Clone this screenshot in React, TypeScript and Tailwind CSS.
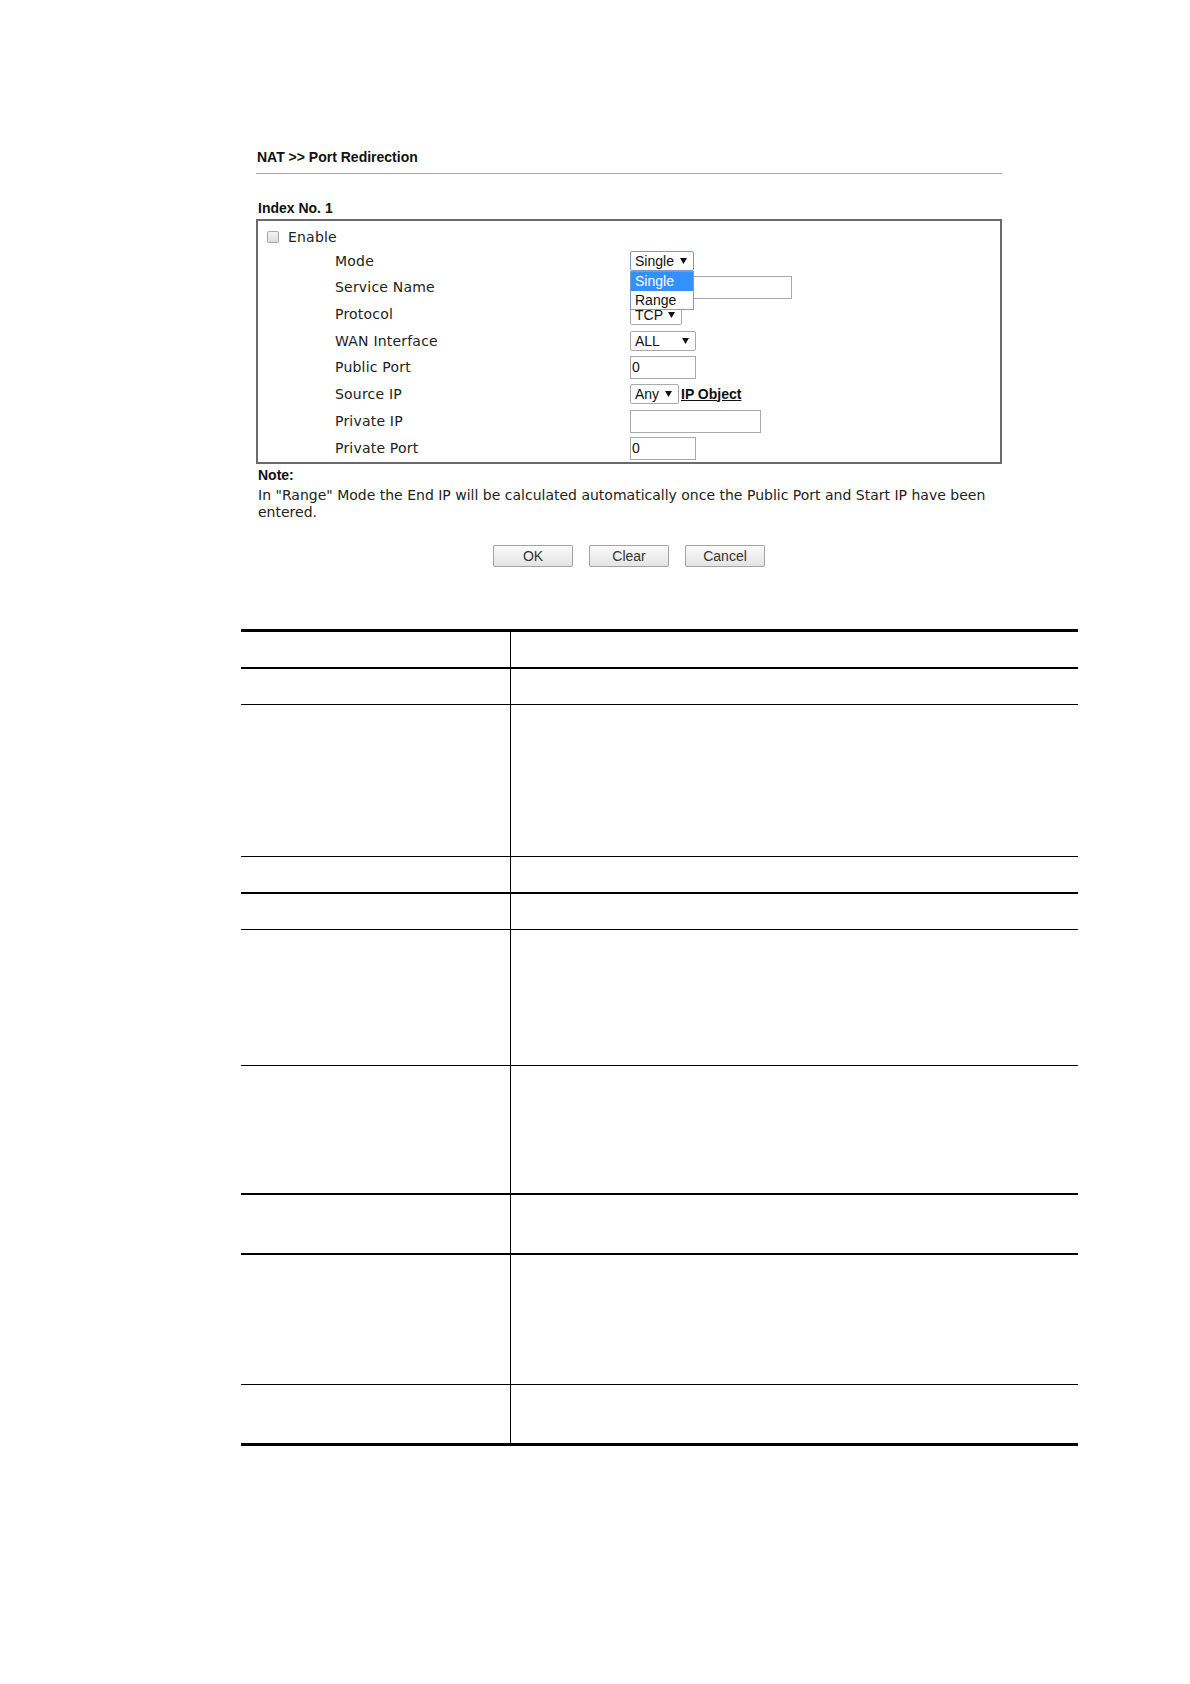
import React from "react";

const Arrow = () => (
  <svg width="7" height="6" viewBox="0 0 7 6" className="shrink-0">
    <polygon points="0,0 7,0 3.5,6" fill="#111" />
  </svg>
);

const Select = ({
  text,
  w,
  focused = false,
}: {
  text: string;
  w: string;
  focused?: boolean;
}) => (
  <div
    className={`${w} h-[20px] flex items-center justify-between pl-[4px] pr-[6px] bg-white border rounded-[2px] ${
      focused ? "border-[#7b9bd0]" : "border-[#a9a9a9]"
    } text-[14px] text-[#111]`}
    style={{ fontFamily: '"Liberation Sans", Arial, sans-serif' }}
  >
    <span className="leading-none">{text}</span>
    <Arrow />
  </div>
);

const Input = ({ w, value = "" }: { w: string; value?: string }) => (
  <div
    className={`${w} h-[23px] flex items-center pl-[1px] bg-white border border-[#a9a9a9] text-[14px] text-[#111]`}
    style={{ fontFamily: '"Liberation Sans", Arial, sans-serif' }}
  >
    {value}
  </div>
);

const Row = ({
  h,
  label,
  children,
}: {
  h: string;
  label: string;
  children?: React.ReactNode;
}) => (
  <div className={`${h} flex items-center`}>
    <div className="w-[372px] pl-[77px] text-[14px] tracking-[0.2px] text-[#222]">{label}</div>
    <div className="flex items-center">{children}</div>
  </div>
);

const Btn = ({ label }: { label: string }) => (
  <div
    className="w-[80px] h-[22px] flex items-center justify-center border border-[#a3a3a3] rounded-[2px] bg-gradient-to-b from-[#fbfbfb] to-[#e3e3e3] text-[14px] text-[#333]"
    style={{ fontFamily: '"Liberation Sans", Arial, sans-serif' }}
  >
    {label}
  </div>
);

const TRow = ({ h, b }: { h: string; b: string }) => (
  <div className={`${h} flex ${b} border-black`}>
    <div className="w-[270px] border-r border-black" />
    <div className="flex-1" />
  </div>
);

export default function App() {
  return (
    <div
      className="w-[1190px] h-[1684px] bg-white relative"
      style={{ fontFamily: '"DejaVu Sans", Verdana, sans-serif' }}
    >
      <div className="ml-[256px] w-[746px] pt-[149px]">
        <div
          className="pl-[1px] text-[14px] leading-[17px] font-bold text-[#111]"
          style={{ fontFamily: '"Liberation Sans", Arial, sans-serif' }}
        >
          NAT &gt;&gt; Port Redirection
        </div>
        <div className="mt-[7px] h-px bg-[#a6a6a6]" />
        <div
          className="mt-[26px] pl-[2px] text-[14px] leading-[17px] font-bold text-[#111]"
          style={{ fontFamily: '"Liberation Sans", Arial, sans-serif' }}
        >
          Index No. 1
        </div>
        <div className="mt-[2px] border-2 border-[#6a6a6a] pt-[5px] relative">
          <div className="h-[22px] flex items-center pl-[9px]">
            <div className="w-[12px] h-[12px] rounded-[2px] border border-[#a8a8a8] bg-gradient-to-b from-[#f4f4f4] to-[#dcdcdc]" />
            <span className="ml-[9px] text-[14px] tracking-[0.2px] text-[#222]">Enable</span>
          </div>
          <Row h="h-[26px]" label="Mode">
            <div className="relative">
              <Select text="Single" w="w-[64px]" focused />
              <div
                className="absolute left-0 top-[20px] w-[64px] bg-white border border-[#7b9bd0] z-10 text-[14px]"
                style={{ fontFamily: '"Liberation Sans", Arial, sans-serif' }}
              >
                <div className="h-[19px] flex items-center pl-[4px] bg-[#3390ff] text-white">
                  Single
                </div>
                <div className="h-[18px] flex items-center pl-[4px] text-[#111]">
                  Range
                </div>
              </div>
            </div>
          </Row>
          <Row h="h-[27px]" label="Service Name">
            <Input w="w-[162px]" />
          </Row>
          <Row h="h-[27px]" label="Protocol">
            <Select text="TCP" w="w-[52px]" />
          </Row>
          <Row h="h-[26px]" label="WAN Interface">
            <Select text="ALL" w="w-[66px]" />
          </Row>
          <Row h="h-[27px]" label="Public Port">
            <Input w="w-[66px]" value="0" />
          </Row>
          <Row h="h-[26px]" label="Source IP">
            <Select text="Any" w="w-[49px]" />
            <span
              className="ml-[2px] text-[14px] font-bold underline text-[#111]"
              style={{ fontFamily: '"Liberation Sans", Arial, sans-serif' }}
            >
              IP Object
            </span>
          </Row>
          <Row h="h-[28px]" label="Private IP">
            <Input w="w-[131px]" />
          </Row>
          <Row h="h-[27px]" label="Private Port">
            <Input w="w-[66px]" value="0" />
          </Row>
        </div>
        <div
          className="mt-[3px] pl-[2px] text-[14px] leading-[17px] font-bold text-[#111]"
          style={{ fontFamily: '"Liberation Sans", Arial, sans-serif' }}
        >
          Note:
        </div>
        <div className="mt-[3px] pl-[2px] text-[14px] leading-[17px] text-[#222]">
          In "Range" Mode the End IP will be calculated automatically once the
          Public Port and Start IP have been entered.
        </div>
        <div className="mt-[24px] flex justify-center gap-[16px]">
          <Btn label="OK" />
          <Btn label="Clear" />
          <Btn label="Cancel" />
        </div>
      </div>

      <div className="ml-[241px] w-[837px] mt-[62px] border-t-[3px] border-black">
        <TRow h="h-[37px]" b="border-b-2" />
        <TRow h="h-[36px]" b="border-b" />
        <TRow h="h-[152px]" b="border-b" />
        <TRow h="h-[37px]" b="border-b-2" />
        <TRow h="h-[36px]" b="border-b" />
        <TRow h="h-[136px]" b="border-b" />
        <TRow h="h-[129px]" b="border-b-2" />
        <TRow h="h-[60px]" b="border-b-2" />
        <TRow h="h-[130px]" b="border-b" />
        <TRow h="h-[61px]" b="border-b-[3px]" />
      </div>
    </div>
  );
}
